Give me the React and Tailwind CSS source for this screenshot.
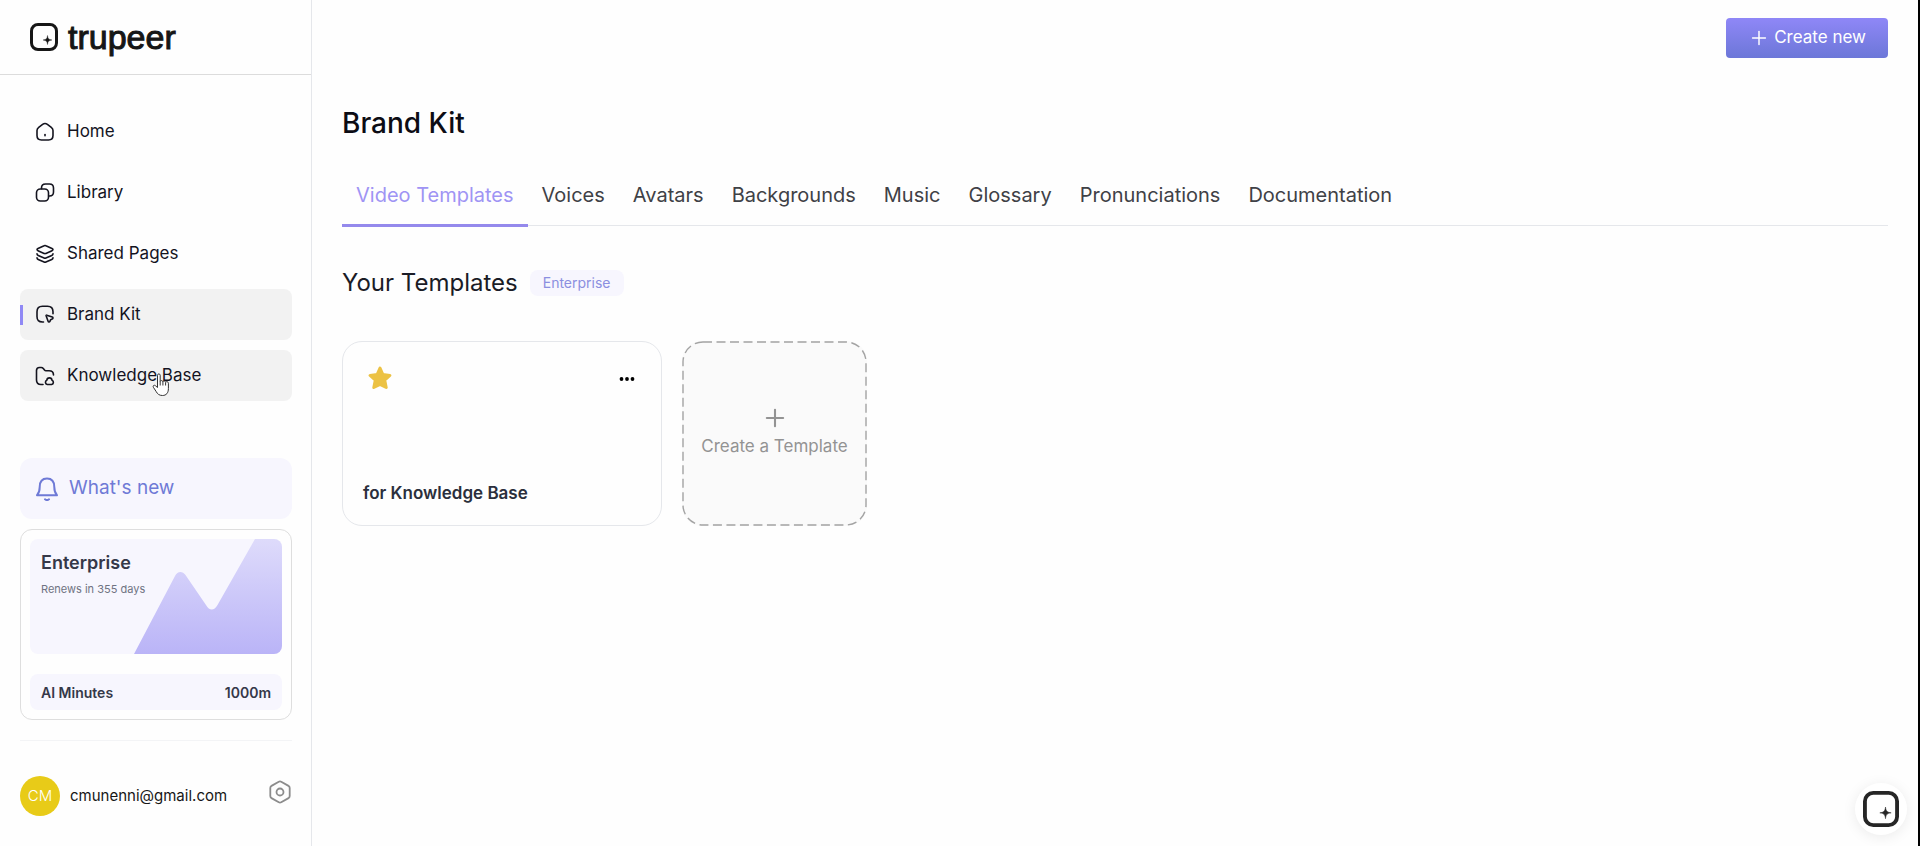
import React, { useState } from "react";
import { Plus } from "lucide-react";

const LogoMark = ({ className }) => (
  <svg viewBox="0 0 28 28" className={className} fill="none" aria-hidden="true">
    <rect
      x="1.5"
      y="1.5"
      width="25"
      height="25"
      rx="6.5"
      stroke="currentColor"
      strokeWidth="3"
    />
    <path
      d="M17.500 12.500c.4 3.200 1.200 4 4.400 4.500-3.200.5-4 1.300-4.400 4.500-.4-3.200-1.200-4-4.400-4.500 3.200-.5 4-1.300 4.400-4.500Z"
      fill="currentColor"
      stroke="currentColor"
      strokeWidth=".4"
    />
  </svg>
);

const NavIcon = ({ children }) => (
  <svg
    viewBox="0 0 20 20"
    className="size-5 shrink-0"
    fill="none"
    stroke="currentColor"
    strokeWidth="1.6"
    strokeLinecap="round"
    strokeLinejoin="round"
    aria-hidden="true"
  >
    {children}
  </svg>
);

const navItems = [
  {
    name: "Home",
    icon: (
      <NavIcon>
        <path d="M2 8.600c0-1.500.5-2.300 1.700-3.200l3.900-3c1.500-1.100 3.300-1.100 4.800 0l3.900 3C17.500 6.300 18 7.100 18 8.600v5c0 3-1.400 4.400-4.400 4.400H6.400C3.400 18 2 16.600 2 13.600Z" />
        <path d="M10 12.500v1.200" />
      </NavIcon>
    ),
  },
  {
    name: "Library",
    icon: (
      <NavIcon>
        <rect x="1.500" y="6" width="12" height="12" rx="3.800" />
        <path d="M6.500 5.800V5c0-2.700 1.300-4 4-4h4c2.700 0 4 1.300 4 4v4c0 2.700-1.300 4-4 4h-.8" />
      </NavIcon>
    ),
  },
  {
    name: "Shared Pages",
    icon: (
      <NavIcon>
        <path d="M10.900 1.700 17 4.500c1.300.6 1.300 1.600 0 2.200l-6.100 2.700c-.6.300-1.200.3-1.800 0L3 6.700c-1.300-.6-1.300-1.600 0-2.200l6.100-2.800c.6-.3 1.200-.3 1.800 0Z" />
        <path d="M2 9.800c0 .7.500 1.300 1.200 1.600l5.900 2.600c.6.300 1.200.3 1.800 0l5.900-2.600c.7-.3 1.200-.9 1.200-1.600" />
        <path d="M2 13.800c0 .7.500 1.300 1.200 1.600l5.900 2.600c.6.300 1.200.3 1.800 0l5.900-2.600c.7-.3 1.200-.9 1.200-1.600" />
      </NavIcon>
    ),
  },
  {
    name: "Brand Kit",
    icon: (
      <NavIcon>
        <path d="M8.500 17H7.500C3.700 17 2 15.300 2 11.500V6.800C2 3 3.700 1.300 7.500 1.300h5C16.300 1.300 18 3 18 6.800v2" />
        <path d="m11.700 10.200 5.600 1.900c.9.300.9 1.400 0 1.800l-1.600.8-.8 1.700c-.4.900-1.500.8-1.800-.1l-2-5.500c-.1-.4.200-.7.600-.6Z" />
      </NavIcon>
    ),
  },
  {
    name: "Knowledge Base",
    icon: (
      <NavIcon>
        <path d="M8 18.500H6C3 18.500 1.500 17 1.500 14V4.500c0-2 1-3 3-3h1.700c1 0 1.500.3 2.100 1l1.200 1.600c.4.500.8.700 1.500.7h3c3 0 4.500 1.400 4.500 4.200" />
        <path d="M12.300 18.500a2.200 2.200 0 0 1-.5-4.200c.3-3.200 4.900-3.200 5.200 0a2.200 2.200 0 0 1-.4 4.200Z" />
      </NavIcon>
    ),
  },
];

const tabs = [
  "Video Templates",
  "Voices",
  "Avatars",
  "Backgrounds",
  "Music",
  "Glossary",
  "Pronunciations",
  "Documentation",
];

const HandCursor = () => (
  <svg
    viewBox="0 0 18 24"
    className="pointer-events-none absolute top-[23px] left-[132px] h-6 w-[18px]"
    fill="#fff"
    stroke="#333"
    strokeWidth="1"
    strokeLinejoin="round"
    aria-hidden="true"
  >
    <path d="M5.500 14.500V2.300c0-1.900 2.700-1.900 2.700 0v6.200c.3-1.300 2.600-1.200 2.700.3.500-1.200 2.600-1 2.700.5.500-1.100 2.800-.9 2.800 1v5.200c0 4.500-2.200 7-5.900 7-3.300 0-5-1.500-6.300-3.900l-2.800-4.300c-.9-1.500.7-2.700 2-1.600Z" />
    <path d="M8.200 8.500v4M10.900 8.800v3.700M13.600 9.500v3" />
  </svg>
);

const Sidebar = () => {
  const active = "Brand Kit";
  const hovered = "Knowledge Base";

  return (
    <aside className="flex w-[312px] shrink-0 flex-col border-r border-gray-200">
      <div className="flex h-[75px] shrink-0 items-center gap-[10px] border-b border-[#dcdcdc] px-[30px] text-[#161616]">
        <LogoMark className="size-7" />
        <span className="font-['Liberation_Sans',Arial,sans-serif] text-[34px] leading-[40px] [-webkit-text-stroke:1px_currentColor]">
          trupeer
        </span>
      </div>

      <nav className="flex flex-col gap-[10px] pt-[31px] pr-[19px] pl-5">
        {navItems.map((item) => (
          <a
            key={item.name}
            href="#"
            className={`relative flex h-[51px] items-center gap-3 rounded-lg pl-[15px] text-[17px] text-[#14141f] ${
              item.name === active || item.name === hovered
                ? "bg-[#f2f2f2]"
                : ""
            }`}
          >
            {item.name === active && (
              <span className="absolute left-0 h-5 w-[3px] bg-[#9089f5]" />
            )}
            {item.icon}
            {item.name}
            {item.name === hovered && <HandCursor />}
          </a>
        ))}
      </nav>

      <div className="mt-auto pr-[19px] pb-[30px] pl-5">
        <button className="flex h-[61px] w-full items-center gap-[10px] rounded-xl bg-[#f7f6fe] pl-[15px] text-[19px] text-[#6f7ad6]">
          <svg
            viewBox="0 0 24 24"
            className="size-6"
            fill="none"
            stroke="currentColor"
            strokeWidth="2"
            strokeLinecap="round"
            strokeLinejoin="round"
            aria-hidden="true"
          >
            <path d="M2 18.200c2.200-2.300 2.700-4.200 2.700-8.200C4.700 4.500 7.500 1.500 12 1.500s7.300 3 7.300 8.500c0 4 .5 5.900 2.700 8.200Z" />
            <path d="M10 22.300c1.200 1 2.800 1 4 0" />
          </svg>
          What's new
        </button>

        <div className="mt-[10px] rounded-xl border border-[#dedede] p-[9px]">
          <div className="relative h-[115px] overflow-hidden rounded-lg bg-[#f7f6fe]">
            <svg
              viewBox="0 0 148 115"
              className="absolute right-0 bottom-0 h-[115px] w-[148px]"
              aria-hidden="true"
            >
              <defs>
                <linearGradient id="peaks" x1="0" y1="0" x2="0" y2="1">
                  <stop offset="0" stopColor="#dedbfb" />
                  <stop offset="1" stopColor="#bab4f7" />
                </linearGradient>
              </defs>
              <path
                d="M0 115 41 37c2.600-5 7.400-5 10.500-1L72 66c3.500 6 8 6 11.500 0L121 0h27v115Z"
                fill="url(#peaks)"
              />
            </svg>
            <div className="relative px-[11px] pt-3">
              <h3 className="text-[18px] leading-6 font-semibold text-[#353849]">
                Enterprise
              </h3>
              <p className="mt-1 text-[11px] leading-5 text-[#6f7382]">
                Renews in 355 days
              </p>
            </div>
          </div>
          <div className="mt-5 flex h-9 items-center justify-between rounded-lg bg-[#f7f6fe] px-[11px] text-[14px] font-semibold text-[#353849]">
            <span>AI Minutes</span>
            <span>1000m</span>
          </div>
        </div>

        <div className="mt-5 flex items-center border-t border-gray-100 pt-[35px]">
          <span className="flex size-10 items-center justify-center rounded-full bg-[#e8cb18] text-[15px] font-light text-white">
            CM
          </span>
          <span className="ml-[10px] text-[15px] text-[#161616]">
            cmunenni@gmail.com
          </span>
          <button aria-label="Settings" className="mb-2 ml-auto text-[#8c8c8c]">
            <svg
              viewBox="0 0 24 24"
              className="size-6"
              fill="none"
              stroke="currentColor"
              strokeWidth="1.8"
              strokeLinejoin="round"
            >
              <path d="M10.800 1.700a2.400 2.400 0 0 1 2.400 0l7.300 4.200c.8.400 1.200 1.100 1.200 2v8.200c0 .9-.4 1.600-1.200 2l-7.300 4.200a2.400 2.400 0 0 1-2.400 0l-7.300-4.200c-.8-.4-1.200-1.100-1.200-2V7.900c0-.9.400-1.600 1.200-2Z" />
              <circle cx="12" cy="12" r="3.500" />
            </svg>
          </button>
        </div>
      </div>
    </aside>
  );
};

const App = () => {
  const [activeTab, setActiveTab] = useState("Video Templates");

  return (
    <div className="flex min-h-screen border-r-2 border-black bg-[#fefefe] font-[Inter,sans-serif]">
      <Sidebar />

      <main className="min-w-0 flex-1 px-[30px]">
        <header className="flex h-[75px] items-center justify-end">
          <button className="flex h-10 items-center gap-1 rounded bg-gradient-to-b from-[#8f87f7] to-[#6c77d8] px-[22px] text-[17px] text-white">
            <Plus className="size-[22px]" strokeWidth={1.6} />
            Create new
          </button>
        </header>

        <h1 className="mt-7 text-[28px] leading-10 font-medium text-[#0c0c14]">
          Brand Kit
        </h1>

        <div className="mt-6 flex h-[59px] border-b border-gray-200">
          {tabs.map((tab) => (
            <button
              key={tab}
              onClick={() => setActiveTab(tab)}
              className={`-mb-[2px] border-b-[3px] px-[14px] pb-[2px] text-[20px] ${
                tab === activeTab
                  ? "border-[#9489ec] text-[#9f94f4]"
                  : "border-transparent text-[#3f4146]"
              }`}
            >
              {tab}
            </button>
          ))}
        </div>

        <div className="mt-[41px] flex items-center gap-3">
          <h2 className="text-2xl text-[#1a1c26]">Your Templates</h2>
          <span className="rounded-lg bg-[#f7f6fe] px-[13px] py-[3px] text-[14px] leading-5 text-[#8b8fe0]">
            Enterprise
          </span>
        </div>

        <div className="mt-[42px] flex gap-5">
          <div className="flex h-[185px] w-[320px] flex-col justify-between rounded-[20px] border border-gray-200 p-5">
            <div className="flex items-center justify-between px-[5px] pt-1">
              <svg
                viewBox="0 0 24 24"
                className="size-6"
                fill="#ecc244"
                stroke="#ecc244"
                strokeWidth="3"
                strokeLinejoin="round"
                aria-hidden="true"
              >
                <path d="m12 2 2.900 6.600 7 .8-5.200 4.700 1.500 7.400L12 18.500l-6.200 3 1.500-7.400L2.100 9.400l7-.8Z" />
              </svg>
              <button aria-label="Template options" className="text-black">
                <svg
                  viewBox="0 0 18 6"
                  className="h-[6px] w-[18px]"
                  fill="currentColor"
                >
                  <circle cx="3.500" cy="4" r="1.900" />
                  <circle cx="9" cy="4" r="1.900" />
                  <circle cx="14.500" cy="4" r="1.900" />
                </svg>
              </button>
            </div>
            <h3 className="text-[17px] leading-6 font-semibold text-[#2b2f3c]">
              for Knowledge Base
            </h3>
          </div>

          <button className="relative flex size-[185px] flex-col items-center justify-center gap-[2px] rounded-[20px] bg-[#fafafa] pb-1 text-[17px] text-[#939393]">
            <svg
              className="absolute inset-0 size-full"
              fill="none"
              aria-hidden="true"
            >
              <rect
                x="1"
                y="1"
                width="183"
                height="183"
                rx="20"
                stroke="#a3a3a3"
                strokeWidth="1.400"
                strokeDasharray="9 4.500"
              />
            </svg>
            <Plus className="size-7" strokeWidth={1.8} />
            Create a Template
          </button>
        </div>
      </main>

      <button
        aria-label="Open assistant"
        className="fixed right-[13px] bottom-[11px] flex size-[52px] items-center justify-center rounded-full bg-white text-[#262626] shadow-[0_2px_14px_rgba(0,0,0,0.08)]"
      >
        <LogoMark className="size-9" />
      </button>
    </div>
  );
};

export default App;
